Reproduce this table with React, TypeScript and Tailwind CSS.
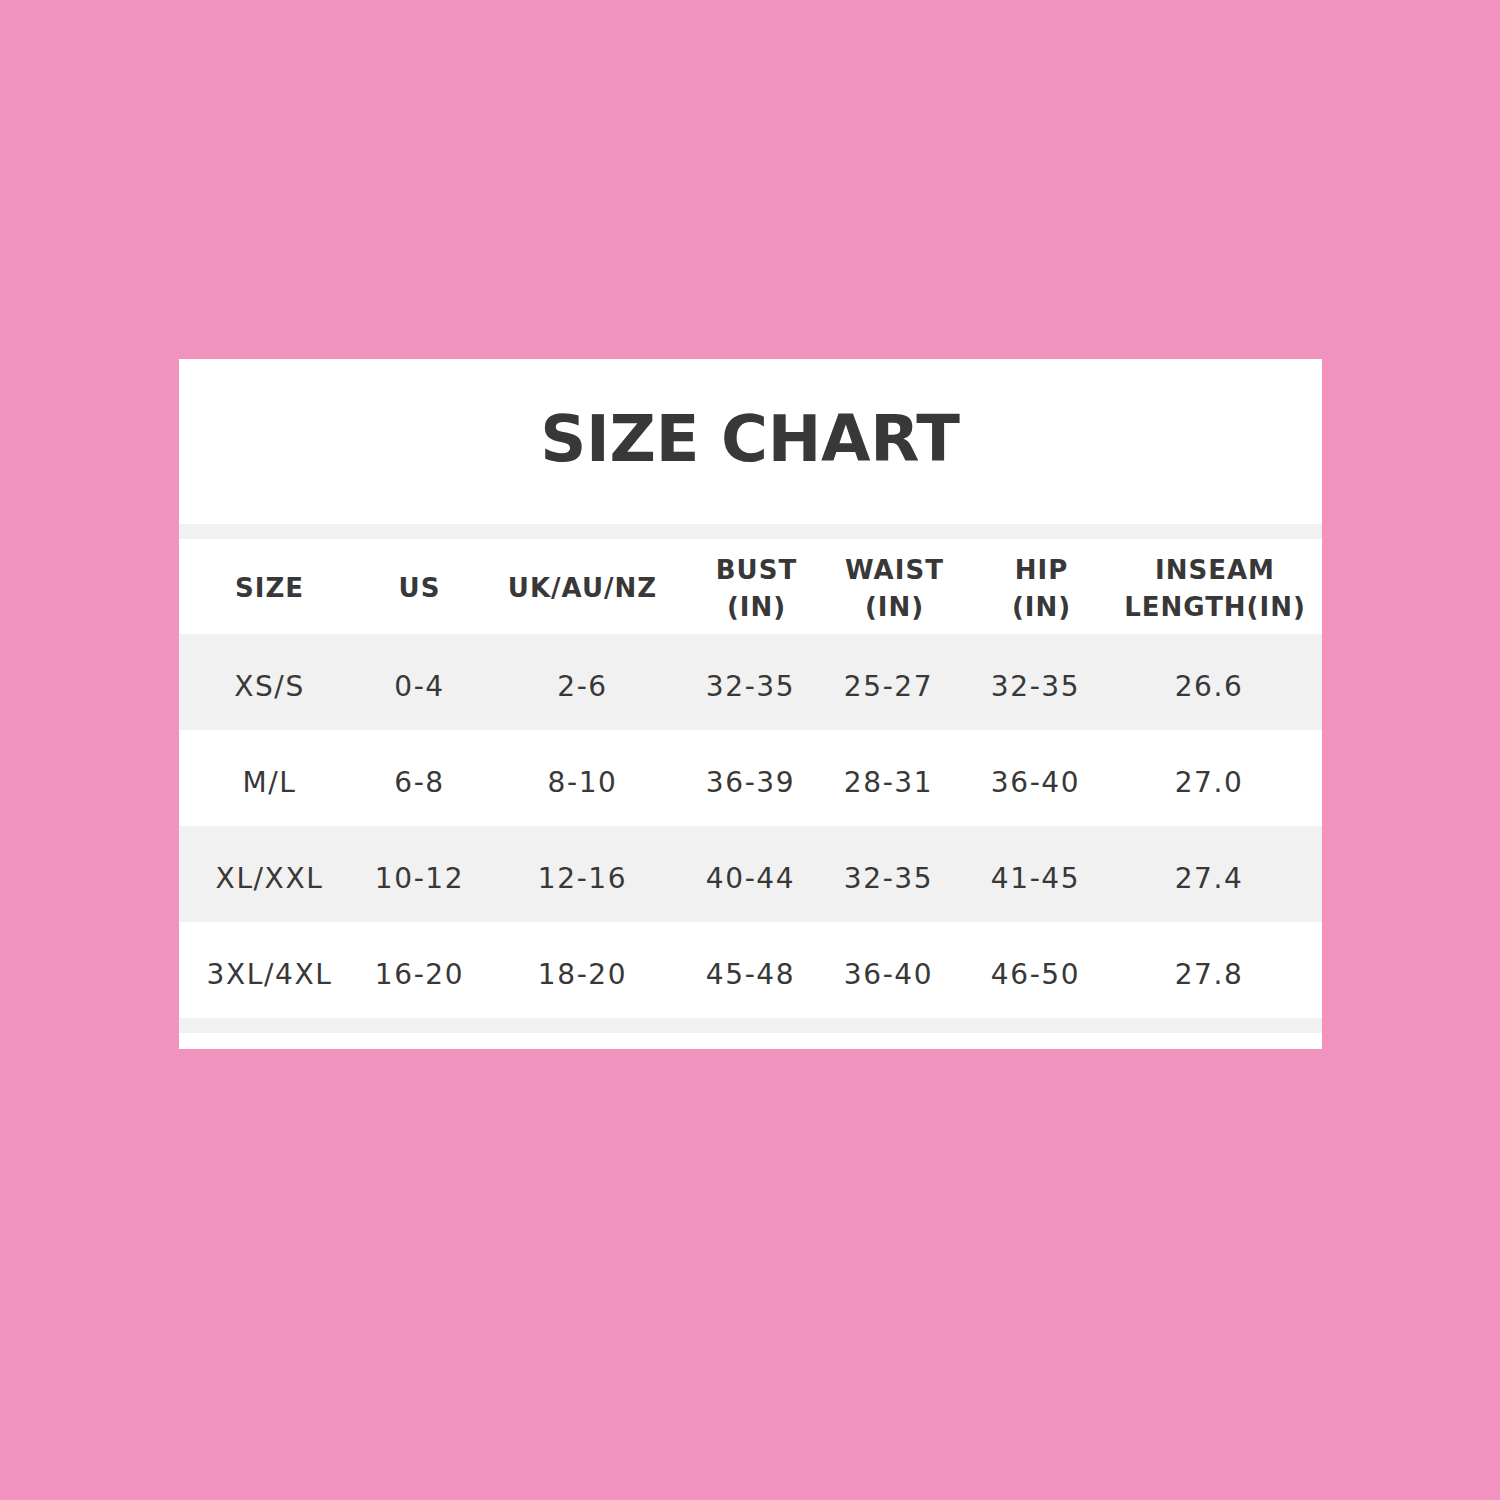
const headers = [
  ['SIZE'],
  ['US'],
  ['UK/AU/NZ'],
  ['BUST', '(IN)'],
  ['WAIST', '(IN)'],
  ['HIP', '(IN)'],
  ['INSEAM', 'LENGTH(IN)'],
];

const rows = [
  ['XS/S', '0-4', '2-6', '32-35', '25-27', '32-35', '26.6'],
  ['M/L', '6-8', '8-10', '36-39', '28-31', '36-40', '27.0'],
  ['XL/XXL', '10-12', '12-16', '40-44', '32-35', '41-45', '27.4'],
  ['3XL/4XL', '16-20', '18-20', '45-48', '36-40', '46-50', '27.8'],
];

const cols = 'grid grid-cols-[182px_118px_208px_128px_148px_146px_213px]';

export default function App() {
  return (
    <div className="h-[1500px] bg-[#f292bf] pt-[359px] font-['DejaVu_Sans',sans-serif] text-[#383838]">
      <div className="mx-auto w-[1143px] bg-white">
        {/* Title */}
        <div className="flex h-[165px] items-center justify-center pb-[6px]">
          <h1 className="text-[64px] font-bold leading-none tracking-[-0.3px]">SIZE CHART</h1>
        </div>
        <div className="h-[15px] bg-[#f1f1f1]" />

        {/* Header */}
        <div className={`${cols} h-[95px] items-center pt-[4px]`}>
          {headers.map((h, j) => (
            <div
              key={h.join()}
              className={`text-center text-[26px] font-bold leading-[37px] tracking-[1px] ${
                j >= 3 && j <= 5 ? 'pl-[12px]' : ''
              }`}
            >
              {h.map((line) => (
                <div key={line}>{line}</div>
              ))}
            </div>
          ))}
        </div>

        {/* Rows */}
        {rows.map((r, i) => (
          <div
            key={r[0]}
            className={`${cols} h-[96px] items-center pt-[9px] ${i % 2 === 0 ? 'bg-[#f1f1f1]' : 'bg-white'}`}
          >
            {r.map((v, j) => (
              <div
                key={j}
                className={`text-center text-[28px] leading-none tracking-[1.6px] ${j === 6 ? 'pr-[12px]' : ''}`}
              >
                {v}
              </div>
            ))}
          </div>
        ))}

        <div className="h-[15px] bg-[#f1f1f1]" />
        <div className="h-[16px]" />
      </div>
    </div>
  );
}
